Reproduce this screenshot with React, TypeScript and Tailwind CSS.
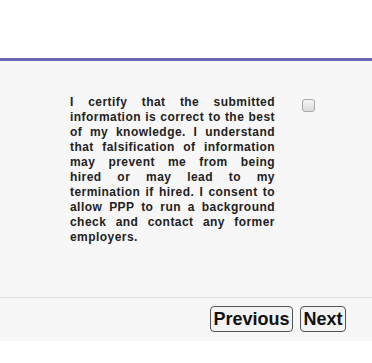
const lines = [
  'I certify that the submitted',
  'information is correct to the best',
  'of my knowledge. I understand',
  'that falsification of information',
  'may prevent me from being',
  'hired or may lead to my',
  'termination if hired. I consent to',
  'allow PPP to run a background',
  'check and contact any former',
];

export default function App() {
  return (
    <div className="w-[372px] h-[363px] bg-white font-['Liberation_Sans',Arial,sans-serif]">
      {/* Header spacer */}
      <div className="h-[61px] border-b-[3px] border-[#6b67b5]" />

      {/* Body */}
      <div className="h-[236px] bg-[#f7f7f7] pt-[34px] pl-[70px] flex items-start">
        <p className="w-[205px] text-[12px] tracking-[0.45px] leading-[15px] font-bold text-[#222]">
          {lines.map((l) => (
            <span key={l} className="block text-justify [text-align-last:justify]">
              {l}
            </span>
          ))}
          <span className="block">employers.</span>
        </p>
        <input
          type="checkbox"
          className="ml-[27px] mt-[4px] w-[13px] h-[13px] appearance-none rounded-[3px] border border-[#a9a9a9] bg-gradient-to-b from-[#f4f4f4] to-[#dcdcdc]"
        />
      </div>

      {/* Footer */}
      <div className="h-[44px] bg-[#f7f7f7] border-t border-[#dddddd] flex justify-end items-start pt-[8px] pr-[26px] gap-[7px]">
        <button className="h-[26px] w-[83px] rounded-[4px] border border-[#555] bg-[#f3f3f3] text-[18px] font-bold text-[#111] leading-none">
          Previous
        </button>
        <button className="h-[26px] w-[46px] rounded-[4px] border border-[#555] bg-[#f3f3f3] text-[18px] font-bold text-[#111] leading-none">
          Next
        </button>
      </div>
    </div>
  );
}
